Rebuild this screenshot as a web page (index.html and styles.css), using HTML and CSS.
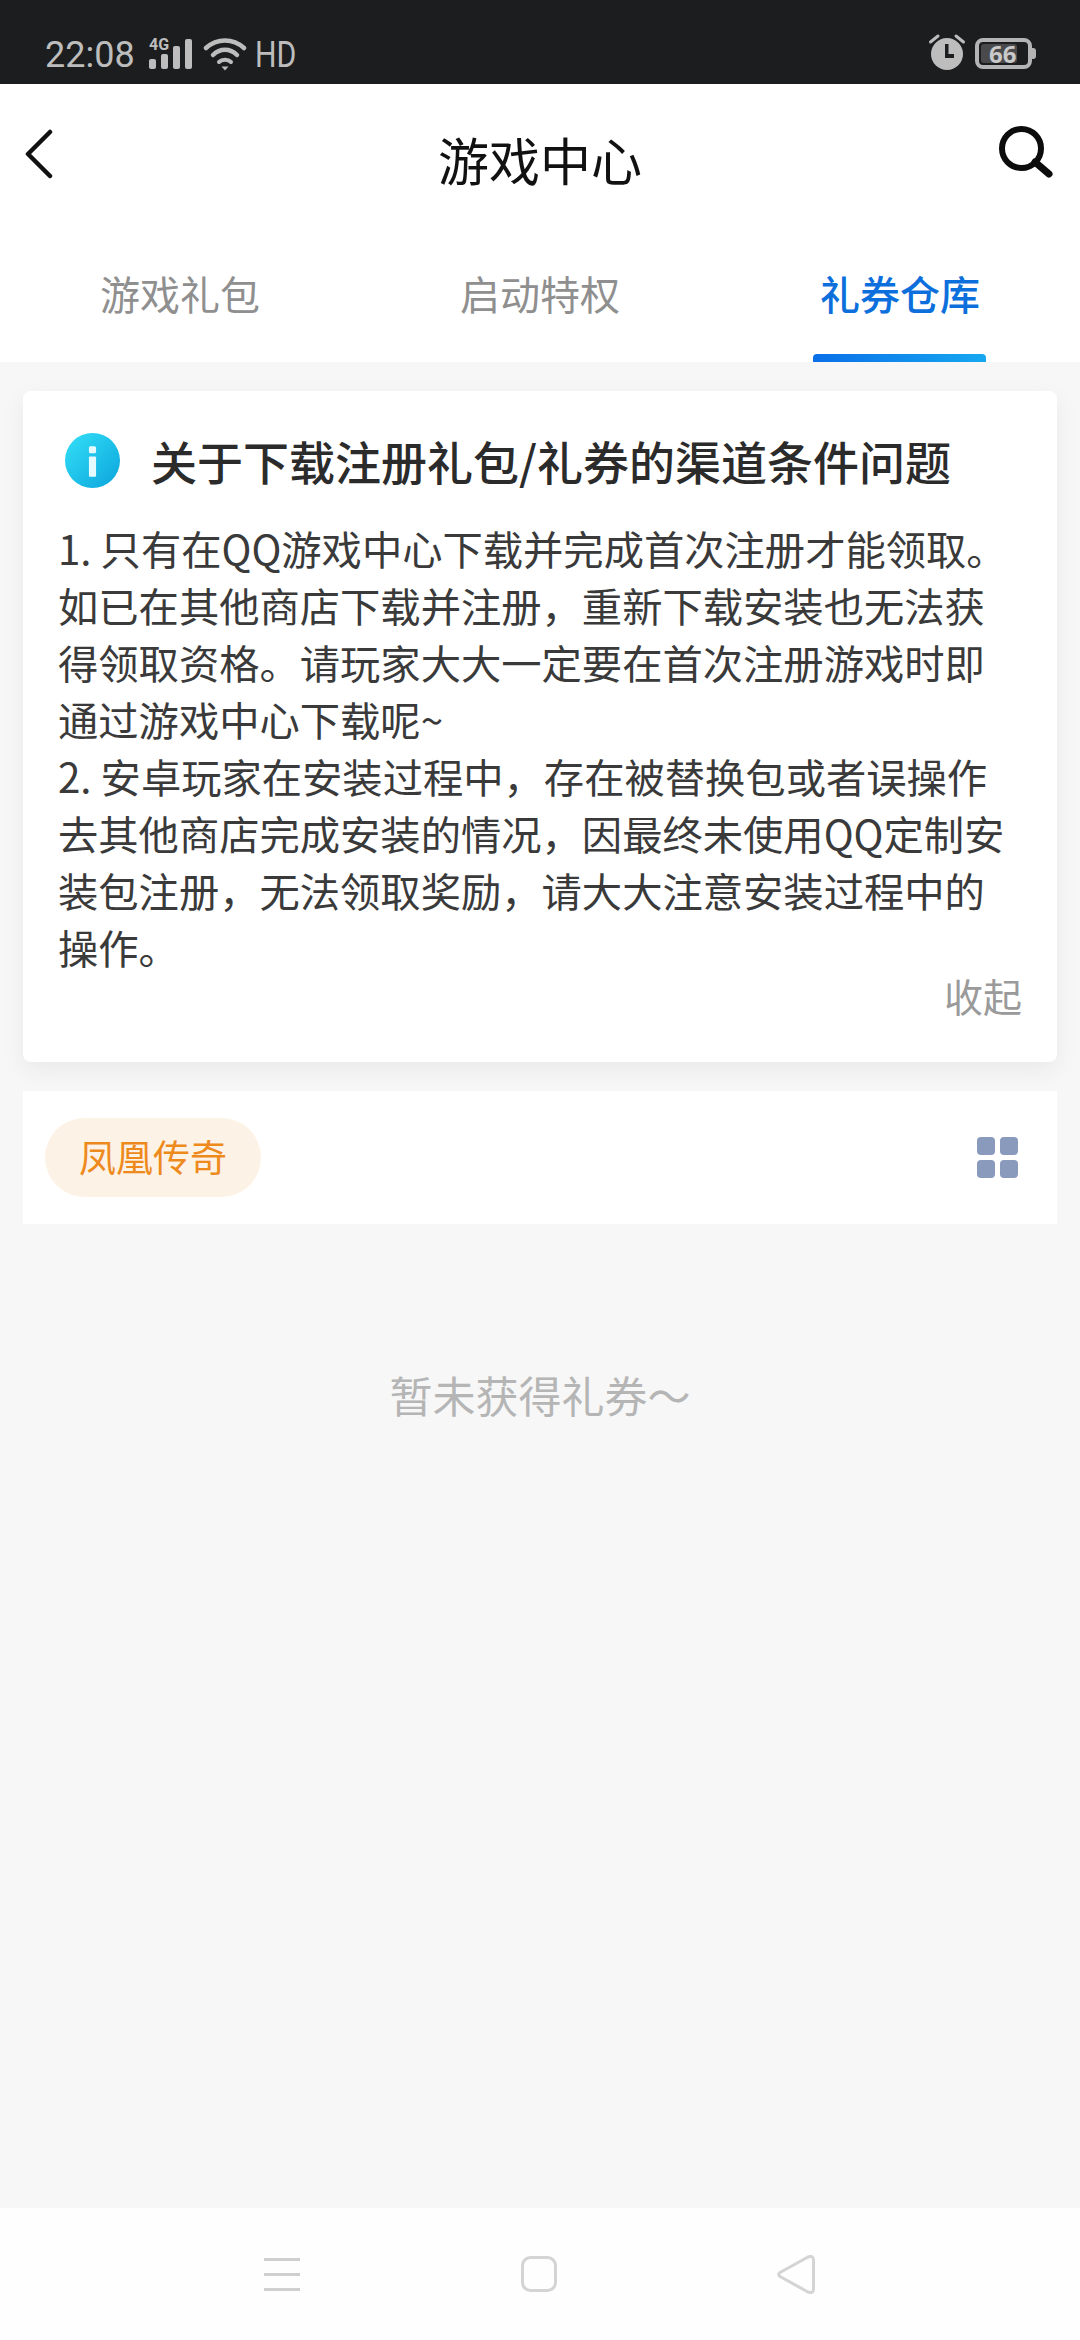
FILE: index.html
```html
<!DOCTYPE html>
<html lang="zh-CN">
<head>
<meta charset="utf-8">
<title>游戏中心</title>
<link rel="stylesheet" href="styles.css">
</head>
<body>
<div class="page">
  <div class="status">
    <div class="status-left">
      <span class="time">22:08</span>
      <span class="signal">
        <span class="net">4G</span>
        <svg class="bars" width="43" height="30" viewBox="0 0 43 30"><rect x="0" y="20" width="7" height="10" rx="2"/><rect x="12" y="15" width="7" height="15" rx="2"/><rect x="24" y="7" width="7" height="23" rx="2"/><rect x="36" y="0" width="7" height="30" rx="2"/></svg>
      </span>
      <svg class="wifi" width="44" height="34" viewBox="0 0 44 34" fill="none" stroke="#bdbdbd" stroke-width="4.5" stroke-linecap="round"><path d="M3 11C14 1 30 1 41 11"/><path d="M10 18C17 11 27 11 34 18"/><path d="M16 25C19 22 25 22 28 25" stroke-width="4"/><path d="M18.500 29.500H25.500L22 33.500Z" fill="#bdbdbd" stroke="none"/></svg>
      <span class="hd">HD</span>
    </div>
    <div class="status-right">
      <svg class="alarm" width="38" height="38" viewBox="0 0 38 38"><circle cx="19" cy="21" r="16" fill="#bdbdbd"/><path d="M17 11H20.500V21H26V25H17Z" fill="#1c1d1f"/><path d="M2.500 9L10 3" stroke="#bdbdbd" stroke-width="3" stroke-linecap="round"/><path d="M35.500 9L28 3" stroke="#bdbdbd" stroke-width="3" stroke-linecap="round"/></svg>
      <span class="battery"><span class="level"></span><span class="pct">66</span><span class="nub"></span></span>
    </div>
  </div>

  <header class="appbar">
    <svg class="back" width="30" height="50" viewBox="0 0 30 50" fill="none" stroke="#111" stroke-width="4.500" stroke-linecap="round" stroke-linejoin="round"><path d="M25 3L3 25L25 47"/></svg>
    <h1 class="title">游戏中心</h1>
    <svg class="search" width="54" height="52" viewBox="0 0 54 52" fill="none" stroke="#0c0c0c" stroke-width="6"><circle cx="22.500" cy="22.500" r="19.500"/><path d="M36 36L50 48" stroke-width="7" stroke-linecap="round"/></svg>
  </header>

  <nav class="tabs">
    <div class="tab">游戏礼包</div>
    <div class="tab">启动特权</div>
    <div class="tab active">礼券仓库</div>
  </nav>

  <main class="content">
    <section class="card">
      <div class="card-head">
        <svg class="info" width="55" height="55" viewBox="0 0 54 54"><defs><linearGradient id="ig" x1="0" y1="0" x2="1" y2="1"><stop offset="0" stop-color="#34e0f7"/><stop offset="1" stop-color="#0ba4dc"/></linearGradient></defs><circle cx="27" cy="27" r="27" fill="url(#ig)"/><rect x="23.500" y="13" width="7" height="7" rx="1.500" fill="#e6fbff"/><rect x="23.500" y="23" width="7" height="20" rx="1" fill="#e6fbff"/></svg>
        <h2 class="card-title">关于下载注册礼包/礼券的渠道条件问题</h2>
      </div>
      <p class="card-body">1. 只有在QQ游戏中心下载并完成首次注册才能领取。<br>如已在其他商店下载并注册，重新下载安装也无法获<br>得领取资格。请玩家大大一定要在首次注册游戏时即<br>通过游戏中心下载呢~<br>2. 安卓玩家在安装过程中，存在被替换包或者误操作<br>去其他商店完成安装的情况，因最终未使用QQ定制安<br>装包注册，无法领取奖励，请大大注意安装过程中的<br>操作。</p>
      <div class="collapse">收起</div>
    </section>

    <section class="filter">
      <span class="pill">凤凰传奇</span>
      <span class="grid-icon"><i></i><i></i><i></i><i></i></span>
    </section>

    <p class="empty">暂未获得礼券～</p>
  </main>

  <footer class="navbar">
    <svg width="36" height="33" viewBox="0 0 36 33" fill="#cfcfcf"><rect x="0" y="0" width="36" height="3"/><rect x="0" y="15" width="36" height="3"/><rect x="0" y="30" width="36" height="3"/></svg>
    <svg width="36" height="36" viewBox="0 0 36 36" fill="none" stroke="#d4d4d4" stroke-width="3"><rect x="1.500" y="1.500" width="33" height="33" rx="8"/></svg>
    <svg width="38" height="39" viewBox="0 0 38 39" fill="none" stroke="#d4d4d4" stroke-width="3" stroke-linejoin="round"><path d="M3 17.500L31 2Q36.500 0 36.500 5V34Q36.500 39 31 37L3 21.500Q0.500 19.500 3 17.500Z"/></svg>
  </footer>
</div>
</body>
</html>
```
FILE: styles.css
```css
* { box-sizing: border-box; }
html, body { margin: 0; padding: 0; }
body { font-family: "Noto Sans CJK SC", "Noto Sans", sans-serif; background: #f7f7f7; }
.page { width: 1080px; height: 2340px; display: flex; flex-direction: column; background: #f7f7f7; overflow: hidden; }

.status { height: 84px; flex: none; background: #1c1d1f; color: #bdbdbd; display: flex; justify-content: space-between; align-items: flex-end; padding: 0 45px 10px 45px; }
.status-left { display: flex; align-items: flex-end; }
.time { font-family: Roboto, sans-serif; font-size: 36px; line-height: 37px; width: 92px; margin-right: 12px; }
.signal { position: relative; display: block; width: 43px; height: 30px; margin-bottom: 5px; margin-right: 11px; }
.net { position: absolute; left: 0; top: 0; font-family: Roboto, sans-serif; font-weight: 700; font-size: 16px; line-height: 12px; }
.bars { display: block; fill: #bdbdbd; }
.wifi { margin-bottom: 3px; margin-right: 8px; }
.hd { font-family: Roboto, sans-serif; font-size: 36px; line-height: 37px; transform: scaleX(.84); transform-origin: left center; }
.status-right { display: flex; align-items: flex-end; gap: 9px; }
.alarm { display: block; margin-bottom: 3px; }
.battery { position: relative; display: block; width: 57px; height: 31px; border: 4px solid #b4b4b4; border-radius: 8px; margin-right: 3px; margin-bottom: 5px; }
.level { position: absolute; left: 2px; top: 2px; bottom: 2px; width: 36px; background: #4a4a4c; border-radius: 3px; }
.pct { position: absolute; left: 10px; right: 4px; top: -3px; font-family: "Noto Sans", sans-serif; font-weight: 700; font-size: 24px; line-height: 30px; color: #c9c9c9; }
.nub { position: absolute; right: -8px; top: 6px; width: 4px; height: 11px; background: #b4b4b4; border-radius: 0 3px 3px 0; }

.appbar { height: 155px; flex: none; background: #fff; display: flex; align-items: flex-start; justify-content: space-between; padding: 44px 27px 0 25px; position: relative; }
.back { display: block; margin-top: 1px; }
.title { position: absolute; left: 0; right: 0; top: 39px; margin: 0; text-align: center; font-size: 51px; line-height: 72px; font-weight: 400; color: #111; }
.search { display: block; margin-top: -2px; }

.tabs { height: 123px; flex: none; background: #fff; display: flex; }
.tab { flex: 1; text-align: center; font-size: 40px; line-height: 60px; padding-top: 24px; color: #8f8f8f; position: relative; }
.tab.active { color: #0c6fdc; font-weight: 500; }
.tab.active::after { content: ""; position: absolute; left: 93px; width: 173px; bottom: 0; height: 8px; border-radius: 4px 4px 0 0; background: linear-gradient(90deg, #0a6fe8, #16a8f0); }

.content { flex: 1; padding: 29px 23px 0; display: flex; flex-direction: column; }
.card { height: 671px; flex: none; background: #fff; border-radius: 8px; box-shadow: 0 8px 24px rgba(0,0,0,.06); padding: 41px 35px 0; display: flex; flex-direction: column; }
.card-head { display: flex; align-items: center; height: 56px; padding-left: 7px; }
.info { display: block; flex: none; margin-right: 31px; }
.card-title { margin: 0; font-size: 46px; line-height: 56px; font-weight: 500; color: #2b2b2b; white-space: nowrap; }
.card-body { margin: 31px 0 0; font-size: 40.300px; line-height: 57px; color: #3a3a3a; white-space: nowrap; }
.collapse { align-self: flex-end; margin-top: -10px; font-size: 39px; line-height: 60px; color: #9a9a9a; }

.filter { height: 133px; flex: none; margin-top: 29px; background: #fff; display: flex; align-items: center; justify-content: space-between; padding: 0 39px 0 22px; }
.pill { width: 216px; height: 79px; border-radius: 40px; background: #fdf2e6; color: #ee8a1c; font-size: 37px; line-height: 77px; text-align: center; }
.grid-icon { display: grid; grid-template-columns: 18px 18px; grid-template-rows: 18px 18px; gap: 5px; }
.grid-icon i { display: block; background: #8a9abd; border-radius: 4px; }

.empty { margin: 135px 0 0; text-align: center; font-size: 43px; line-height: 70px; color: #b5b5b5; }

.navbar { height: 132px; flex: none; background: #fefefe; display: flex; align-items: center; padding: 0 265px 0 264px; justify-content: space-between; }
.navbar svg { display: block; }
```
